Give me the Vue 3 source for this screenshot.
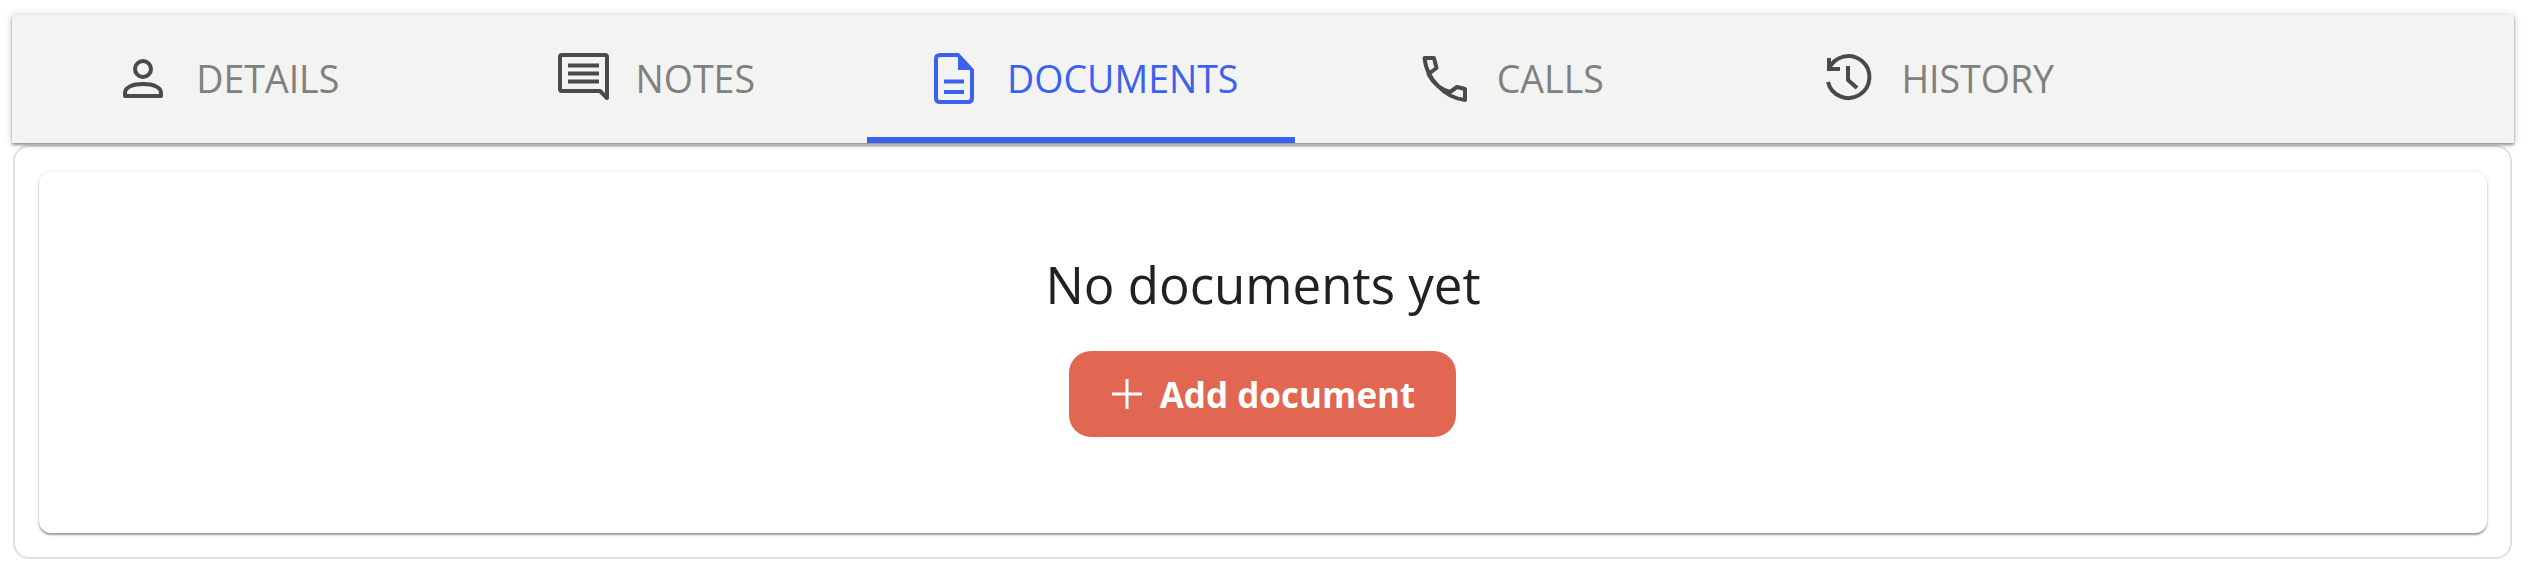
<script setup>
const tabs = [
  { key: 'details', label: 'DETAILS', viewBox: '113 44 60 70' },
  { key: 'notes', label: 'NOTES', viewBox: '552 44 60 70' },
  { key: 'documents', label: 'DOCUMENTS', viewBox: '924 44 60 70', active: true },
  { key: 'calls', label: 'CALLS', viewBox: '1413 44 60 70' },
  { key: 'history', label: 'HISTORY', viewBox: '1818 44 60 70' },
]
</script>

<template>
  <div class="page">
    <nav class="tabbar">
      <div v-for="tab in tabs" :key="tab.key" class="tab" :class="{ active: tab.active }">
        <svg class="tab-icon" width="60" height="70" :viewBox="tab.viewBox" aria-hidden="true">
          <g v-if="tab.key === 'details'" class="line">
            <circle cx="143" cy="69" r="8" />
            <path d="M125 96V93C125 87 133 84 143 84C153 84 161 87 161 93V96Z" />
          </g>
          <g v-else-if="tab.key === 'notes'">
            <path class="line" d="M561 55H604Q606 55 606 57V98L599 91H561Q559 91 559 89V57Q559 55 561 55Z" />
            <path class="bars" d="M567 63.5H598V67.5H567ZM567 71.5H598V75.5H567ZM567 79.5H598V83.5H567Z" />
          </g>
          <g v-else-if="tab.key === 'documents'">
            <path class="line" d="M940 55H958L972 70V98Q972 102 968 102H940Q936 102 936 98V59Q936 55 940 55Z" />
            <path class="fill" d="M958 54L973 70H958Z" />
            <path class="bars" d="M944 79.5H964V83.5H944ZM944 90H964V94H944Z" />
          </g>
          <g v-else-if="tab.key === 'calls'" class="line">
            <path d="M1423.500 58H1433L1435.500 68L1427.500 74Q1431 81 1437 86Q1442 90 1449 92L1456 87L1464 89V100Q1448 98 1437 86Q1425 74 1423.500 58Z" />
          </g>
          <g v-else class="line">
            <path d="M1829 69A21 21 0 1 1 1828 82" />
            <path class="line-solid" d="M1827 58V71H1840V67H1831V58Z" />
            <path d="M1848 66V80L1857 88" />
          </g>
        </svg>
        <span class="tab-label">{{ tab.label }}</span>
      </div>
    </nav>
    <section class="panel">
      <div class="card">
        <h2 class="empty-title">No documents yet</h2>
        <button class="add-btn" type="button">
          <svg class="plus" width="30" height="30" viewBox="0 0 30 30" aria-hidden="true">
            <path d="M15 0V30M0 15H30" />
          </svg>
          <span>Add document</span>
        </button>
      </div>
    </section>
  </div>
</template>

<style>
html, body { margin: 0; background: #fff; }
</style>

<style scoped>
.page {
  width: 2532px;
  height: 572px;
  padding-top: 15px;
  box-sizing: border-box;
  overflow: hidden;
  font-family: "Open Sans", "Noto Sans", sans-serif;
}
.tabbar {
  position: relative;
  z-index: 1;
  display: flex;
  height: 128px;
  margin: 0 18px 0 12px;
  background: #f3f3f2;
  border-radius: 3px 3px 0 0;
  box-shadow: 0 2px 3px rgba(0, 0, 0, 0.38), 0 0 8px rgba(0, 0, 0, 0.18);
}
.tab {
  flex: 0 0 427.5px;
  height: 128px;
  padding-left: 1px;
  box-sizing: border-box;
  display: flex;
  align-items: center;
  justify-content: center;
  gap: 23px;
  color: #808080;
  position: relative;
}
.tab.active { color: #3a62ee; }
.tab.active::after {
  content: "";
  position: absolute;
  left: 0;
  right: 0;
  bottom: 0;
  height: 6px;
  background: #3a62ee;
}
.tab-icon { display: block; flex: none; }
.tab-label { font-size: 37.5px; line-height: 50px; }
.line, .line path, .line circle {
  fill: none;
  stroke: #4a4a48;
  stroke-width: 4;
  stroke-linejoin: round;
}
.line-solid { fill: #4a4a48 !important; stroke: none !important; }
.bars { fill: #4a4a48; }
.active .line { stroke: #3a62ee; }
.active .bars, .active .fill { fill: #3a62ee; }
.panel {
  height: 414px;
  margin: 2px 20px 0 13px;
  padding: 25px 23px 0 24px;
  box-sizing: border-box;
  background: #fff;
  border: 2px solid #e0e0e0;
  border-radius: 16px;
}
.card {
  height: 361px;
  box-sizing: border-box;
  padding-top: 77px;
  display: flex;
  flex-direction: column;
  align-items: center;
  background: #fff;
  border-radius: 12px;
  box-shadow: 0 2px 2px rgba(0, 0, 0, 0.36), 0 0 4px rgba(0, 0, 0, 0.1);
}
.empty-title {
  margin: 0;
  font-size: 51px;
  line-height: 70px;
  font-weight: 400;
  color: #212121;
}
.add-btn {
  margin-top: 32px;
  margin-right: 1px;
  width: 387px;
  height: 86px;
  display: flex;
  align-items: center;
  justify-content: center;
  gap: 18px;
  padding: 0 0 0 2px;
  border: 0;
  border-radius: 22px;
  background: #e26753;
  color: #fff;
  font-family: inherit;
  font-size: 35px;
  font-weight: 700;
}
.plus path { stroke: #fff; stroke-width: 3; fill: none; }
</style>
